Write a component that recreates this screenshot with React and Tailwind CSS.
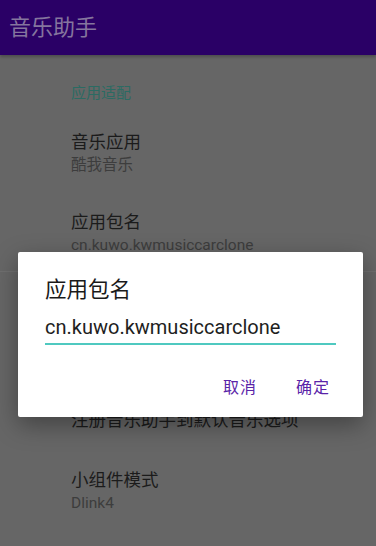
import React from "react";

const font = { fontFamily: "Roboto, 'Noto Sans CJK SC', sans-serif" };

function Item({ title, summary }) {
  return (
    <div className="pl-[71px] pr-4 flex flex-col">
      <div className="text-[17.5px] leading-[24px] text-[#1b1b1b]">{title}</div>
      {summary && (
        <div className="text-[15.5px] leading-[22px] text-[#3d3d3d]">{summary}</div>
      )}
    </div>
  );
}

export default function App() {
  return (
    <div
      className="relative w-[376px] h-[546px] overflow-hidden bg-[#666666]"
      style={font}
    >
      <div className="h-[55px] bg-[#2a0066] flex items-center pl-[9px] shadow-[0_2px_3px_rgba(0,0,0,0.25)]">
        <span className="text-[22px] text-[#85759e]">音乐助手</span>
      </div>
      <div className="flex flex-col">
        <div className="pl-[71px] pt-[27px] text-[15px] leading-[22px] text-[#2b6b63]">
          应用适配
        </div>
        <div className="pt-[26px]">
          <Item title="音乐应用" summary="酷我音乐" />
        </div>
        <div className="pt-[34px]">
          <Item title="应用包名" summary="cn.kuwo.kwmusiccarclone" />
        </div>
        <div className="mt-[15px] h-px bg-[#6f6f6f]" />
        <div className="pt-[136px]">
          <Item title="注册音乐助手到默认音乐选项" />
        </div>
        <div className="pt-[36px]">
          <Item title="小组件模式" summary="Dlink4" />
        </div>
      </div>

      <div className="absolute left-[18px] top-[252px] w-[345px] h-[165px] bg-white rounded-[2px] shadow-[0_8px_24px_rgba(0,0,0,0.35)] flex flex-col">
        <div className="pl-[27px] pt-[24px] text-[21.5px] leading-[28px] text-[#1a1a1a]">
          应用包名
        </div>
        <div className="ml-[27px] mr-[27px] mt-[10px] border-b-2 border-[#4fc9c0] pb-[3px]">
          <div className="text-[20px] leading-[26px] text-[#1e1e1e]">cn.kuwo.kwmusiccarclone</div>
        </div>
        <div className="flex justify-end gap-[39px] pr-[33px] mt-[32px] text-[16px] leading-[22px] text-[#5a24a8]">
          <span className="tracking-[1px]">取消</span>
          <span className="tracking-[1px]">确定</span>
        </div>
      </div>
    </div>
  );
}
